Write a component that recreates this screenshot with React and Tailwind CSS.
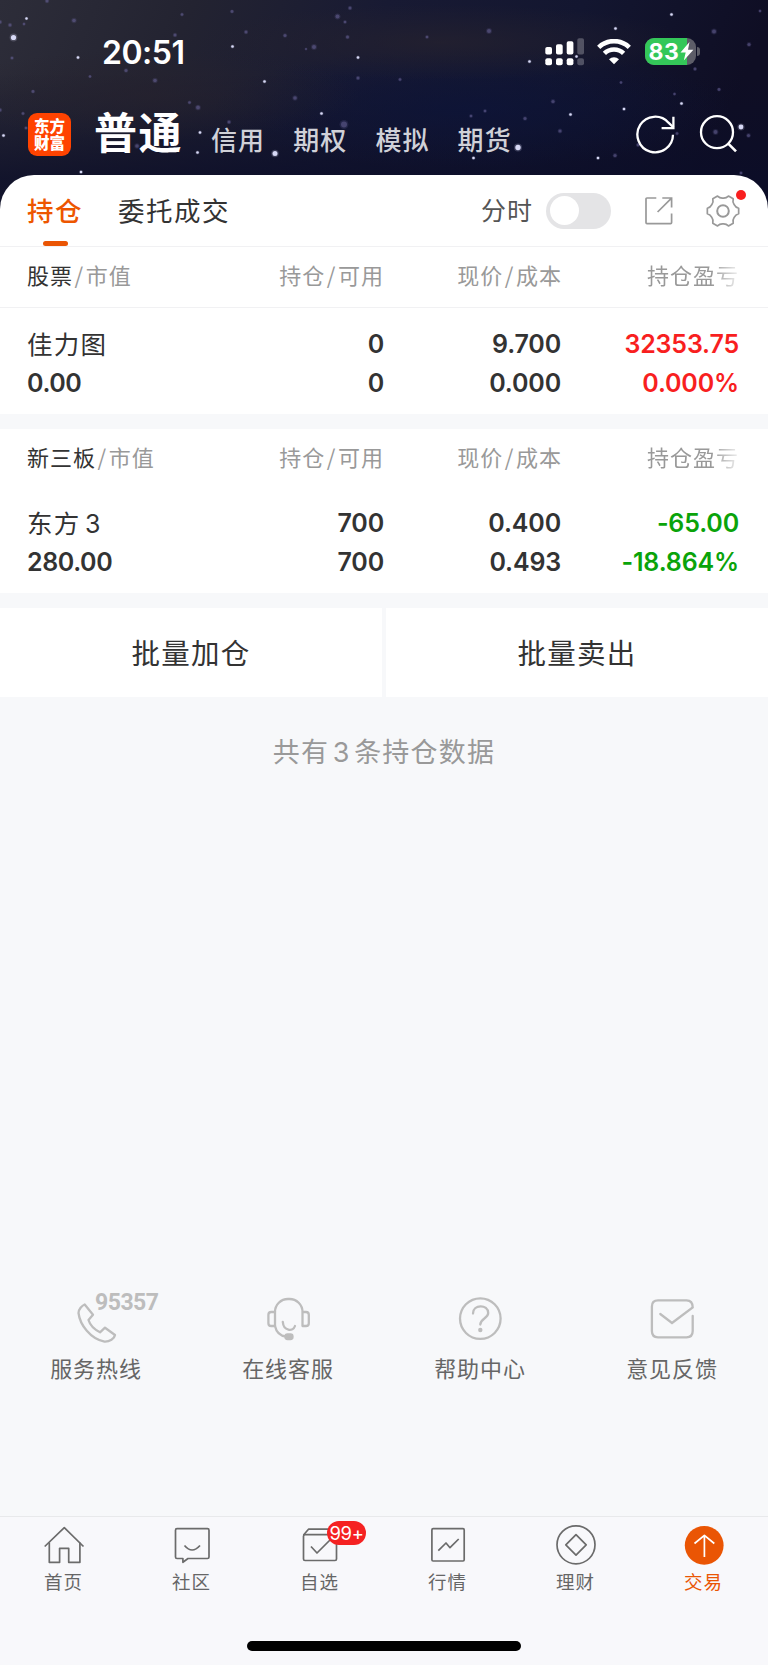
// ============================================================
// App.jsx — 交易 / 持仓 page
// ============================================================
import React, { useState } from 'react';

// [x, y, radius, bright]
const STARS = [
  [26.5, 18.5, 1.2, 1], [13.5, 37.5, 2.6, 1], [78, 57.5, 1.3, 1], [74, 20.5, 1.8, 0], [10, 25, 1.5, 0],
  [0, 22, 1.5, 0], [24, 24, 1.2, 0], [12, 58, 1.3, 0], [47, 1, 1.5, 0], [126, 70.5, 1.5, 0],
  [155, 80.5, 1.8, 0], [232.5, 46.5, 1.3, 1], [246, 32, 1.5, 0], [232, 11.5, 1.4, 0], [182, 14.5, 1.3, 0],
  [175, 35, 1.5, 0], [285, 35.5, 1.5, 0], [337.5, 16.5, 2, 0], [350, 8, 1.5, 0], [345, 22, 1.3, 0],
  [347.5, 37, 1.5, 0], [314, 47, 2, 0], [306, 49, 1, 0], [358, 57.5, 1.3, 1], [358, 78, 1.5, 0],
  [264.5, 81.5, 1.3, 1], [295, 98, 1.8, 0], [189.5, 102.5, 1.3, 0], [198, 107.5, 1.9, 0], [321.5, 113.5, 1.3, 1],
  [344, 124.5, 3, 0], [200, 132.5, 1.3, 1], [197.5, 152.5, 1.3, 1], [275, 153.5, 2.5, 1], [3.5, 135.5, 1.3, 1],
  [33, 91.5, 1.4, 0], [0, 110, 1.5, 0], [23, 113.5, 1.3, 0], [26, 128, 1.3, 0], [81, 172, 1.3, 1],
  [229, 122, 1.5, 0], [137, 146, 1.8, 0], [90, 76.5, 1.2, 0], [489, 31, 2, 0], [427, 37, 1.3, 0],
  [671.5, 14.5, 1.3, 1], [615.5, 28.5, 1.3, 1], [714, 31.5, 2, 0], [529.5, 61.5, 1.3, 1], [576.5, 56.5, 1.2, 1],
  [400, 79.5, 1.3, 0], [553, 101.5, 1.6, 0], [624, 109, 1.3, 1], [681.5, 103.5, 1.3, 1], [570.5, 114.5, 1.3, 1],
  [525, 118.5, 1.5, 0], [471, 116, 1.3, 0], [485, 111, 1.3, 0], [560, 131, 1.6, 0], [518, 147.5, 2.7, 1],
  [473.5, 158, 1.3, 1], [598, 158, 1.3, 1], [638, 145, 1.4, 0], [741, 127, 2.4, 1], [719, 89.5, 1.4, 0],
  [749, 44.5, 1.6, 0], [695, 69, 1.4, 0], [748.5, 135.5, 1.6, 0], [741, 173, 1.3, 0], [621, 82.5, 1.2, 0],
  [674.5, 94, 1.2, 0], [615, 155.5, 1.6, 0], [677, 133.5, 1.3, 0], [760, 11, 1.2, 0], [715.5, 132, 2, 0],
];

const GROUPS = [
  {
    title: '股票',
    lined: true,
    name: '佳力图',
    value: '0.00',
    hold: ['0', '0'],
    price: ['9.700', '0.000'],
    profit: ['32353.75', '0.000%'],
    color: 'text-[#f81f1f]',
  },
  {
    title: '新三板',
    lined: false,
    name: '东方',
    suffix: '3',
    value: '280.00',
    hold: ['700', '700'],
    price: ['0.400', '0.493'],
    profit: ['-65.00', '-18.864%'],
    color: 'text-[#0aa30a]',
  },
];

// six-tooth cog outline, centred on 0,0
const cogPath = () => {
  const pt = (deg, r) => {
    const a = (deg * Math.PI) / 180;
    return `${(r * Math.cos(a)).toFixed(2)} ${(r * Math.sin(a)).toFixed(2)}`;
  };
  let d = '';
  for (let k = 0; k < 6; k++) {
    const a = k * 60;
    d += `${k === 0 ? 'M' : 'L'}${pt(a - 10, 15.9)} L${pt(a + 10, 15.9)} C${pt(a + 16, 13)} ${pt(a + 21, 12.9)} ${pt(a + 30, 12.9)} C${pt(a + 39, 12.9)} ${pt(a + 44, 13)} ${pt(a + 50, 15.9)} `;
  }
  return d + 'Z';
};

function NightSky() {
  return (
    <svg className="absolute inset-0 w-full h-full" viewBox="0 0 768 210" preserveAspectRatio="none">
      <defs>
        <linearGradient id="sky" x1="0" y1="0" x2="1" y2="0.12">
          <stop offset="0" stopColor="#2d2d39" />
          <stop offset="0.25" stopColor="#232331" />
          <stop offset="0.5" stopColor="#181a33" />
          <stop offset="0.75" stopColor="#131630" />
          <stop offset="1" stopColor="#0f0e24" />
        </linearGradient>
        <linearGradient id="fade" x1="0" y1="0" x2="0" y2="1">
          <stop offset="0.35" stopColor="#0b0d28" stopOpacity="0" />
          <stop offset="0.85" stopColor="#0b0d28" stopOpacity="0.75" />
        </linearGradient>
        <radialGradient id="blue">
          <stop offset="0" stopColor="#0d1438" stopOpacity="0.8" />
          <stop offset="1" stopColor="#0d1438" stopOpacity="0" />
        </radialGradient>
        <radialGradient id="dust">
          <stop offset="0" stopColor="#26222e" stopOpacity="0.7" />
          <stop offset="1" stopColor="#26222e" stopOpacity="0" />
        </radialGradient>
      </defs>
      <rect width="768" height="210" fill="url(#sky)" />
      <rect width="768" height="210" fill="url(#fade)" />
      <ellipse cx="470" cy="108" rx="260" ry="60" fill="url(#blue)" />
      <ellipse cx="440" cy="42" rx="250" ry="38" fill="url(#dust)" />
      <ellipse cx="150" cy="95" rx="210" ry="46" fill="url(#dust)" />
      {STARS.map(([x, y, r, bright]) => (
        <g key={`${x}-${y}`} fill={bright ? '#dfe2ff' : '#6a6499'}>
          <circle cx={x} cy={y} r={r * 1.5} opacity="0.2" />
          <circle cx={x} cy={y} r={r} opacity={bright ? 0.95 : 0.5} />
        </g>
      ))}
    </svg>
  );
}

function StatusBar() {
  return (
    <div className="relative flex items-center h-[103px] pl-[102px] pr-[68px] text-white">
      <span className="flex-1 mt-[3px] font-['Inter'] font-semibold text-[32px] leading-none tracking-[-0.5px]">20:51</span>
      <svg className="mt-px" width="40" height="28" viewBox="0 0 40 28" fill="#fff">
        <rect x="0.3" y="9" width="6.7" height="7.5" rx="1.8" />
        <rect x="11" y="6.3" width="6.7" height="10.2" rx="1.8" />
        <rect x="21.7" y="3.3" width="6.7" height="13.2" rx="1.8" />
        <rect x="32.3" y="0.3" width="6.7" height="16.2" rx="1.8" opacity="0.25" />
        <rect x="0.3" y="20.3" width="6.7" height="7" rx="2" />
        <rect x="11" y="20.3" width="6.7" height="7" rx="2" />
        <rect x="21.7" y="20.3" width="6.7" height="7" rx="2" />
        <rect x="32.3" y="20.3" width="6.7" height="7" rx="2" opacity="0.25" />
      </svg>
      <svg className="ml-[12px]" width="34" height="26" viewBox="0 0 34 26" fill="none" stroke="#fff" strokeWidth="4.6">
        <path d="M1.7 8.3a22 22 0 0 1 30.6 0" />
        <path d="M7.4 14.4a13.7 13.7 0 0 1 19.2 0" />
        <path d="M17 25.3l-5-5.1a7.2 7.2 0 0 1 10 0z" fill="#fff" stroke="none" />
      </svg>
      <div className="ml-[14px] flex items-center">
        <div className="relative flex items-center w-[51px] h-[27px] rounded-[9px] overflow-hidden bg-[#5d5d68]">
          <div className="w-[42px] h-full bg-[#34c759]" />
          <span className="absolute left-[4px] top-[2px] font-['Inter'] font-bold text-[23px] leading-[24px] tracking-[0.5px]">83</span>
          <svg className="absolute left-[35px] top-[4px]" width="14" height="19" viewBox="0 0 14 19" fill="#fff">
            <path d="M9.5 0L0.5 10.6h5.2L3.8 18.6 13.4 7.8H8z" />
          </svg>
        </div>
        <div className="ml-[1.5px] w-[3px] h-[9px] rounded-r-full bg-[#5d5d68]" />
      </div>
    </div>
  );
}

function TopNav() {
  return (
    <div className="relative flex items-center h-[72px] pb-[10px] pl-[28px] pr-[30px] text-white">
      <div className="flex items-center justify-center w-[43px] h-[43px] rounded-[9px] bg-[#ff4300] text-[15.5px] leading-[17.5px] font-black">
        <span>
          东方
          <br />
          财富
        </span>
      </div>
      <span className="ml-[23px] -mt-[7px] text-[43px] leading-none font-bold tracking-[1.5px]">普通</span>
      <div className="flex gap-[28px] ml-[28px] mt-[9px] text-[26px] leading-none font-medium tracking-[1.1px] text-[#d0d1d8]">
        <span>信用</span>
        <span>期权</span>
        <span>模拟</span>
        <span>期货</span>
      </div>
      <div className="flex-1" />
      <svg width="102" height="40" viewBox="0 0 102 40" fill="none" stroke="#fff" strokeWidth="2.3">
        <path d="M37 20.8A17.8 17.8 0 1 1 32.5 8.7L37.5 13.5" />
        <path d="M37.4 2.8v11.3H25.6" />
        <circle cx="81" cy="18.2" r="16" />
        <path d="M92 29.3l8 8" strokeWidth="2.6" />
      </svg>
    </div>
  );
}

function Tabs() {
  const [minute, setMinute] = useState(false);
  return (
    <div className="flex h-[72px] pl-[27px] pr-[26px] border-b border-[#f1f1f3] text-[26.5px] tracking-[1.5px]">
      <div className="relative flex items-center h-[71px] pb-[2px] font-medium text-[#ed5600]">
        持仓
        <span className="absolute left-[16px] bottom-0 w-[25px] h-[5px] rounded-[2.5px] bg-[#ea5504]" />
      </div>
      <div className="flex items-center ml-[35px] pb-[2px] text-[#333]">委托成交</div>
      <div className="flex-1" />
      <div className="flex items-center">
        <span className="-mt-[2px] text-[25px] tracking-[1px] text-[#555]">分时</span>
        <button
          onClick={() => setMinute(!minute)}
          className={`flex items-center w-[65px] h-9 ml-[13px] px-[3.5px] rounded-full bg-[#e4e4e6] ${minute ? 'justify-end' : ''}`}
        >
          <span className="w-[29px] h-[29px] rounded-full bg-white" />
        </button>
        <svg className="ml-[33px]" width="30" height="30" viewBox="0 0 30 30" fill="none" stroke="#999" strokeWidth="1.7">
          <path d="M12.3 2H3q-1 0-1 1V26.6q0 1 1 1H26.6q1 0 1-1V17.5" />
          <path d="M18.3 2H27.6V11.5M27.3 2.3L13.6 16" />
        </svg>
        <div className="relative ml-[30px]">
          <svg width="38" height="38" viewBox="-19 -19 38 38" fill="none" stroke="#999" strokeWidth="1.7" strokeLinejoin="round">
            <path d={cogPath()} />
            <circle r="5.8" strokeWidth="2" />
          </svg>
          <span className="absolute right-[-4px] top-[-2px] w-[10.5px] h-[10.5px] rounded-full bg-[#f91f1f]" />
        </div>
      </div>
    </div>
  );
}

function Slash() {
  return <span className="inline-block px-[1.5px]">/</span>;
}

const COLS = 'grid grid-cols-[201px_156px_178px_178px] pl-[27px]';

function Cells({ values, className = '' }) {
  return (
    <div className={`text-right ${className}`}>
      {values.map((v, i) => (
        <div key={i} className="h-[39px]">{v}</div>
      ))}
    </div>
  );
}

function Group({ group }) {
  return (
    <section className="bg-white">
      <div
        className={`${COLS} items-center text-[22px] leading-8 tracking-[1px] text-[#999] ${
          group.lined ? 'h-[61px] pb-[7px] border-b border-[#f1f1f3]' : 'h-[59px] pb-[5px]'
        }`}
      >
        <div>
          <span className="text-[#333]">{group.title}</span>
          <Slash />
          市值
        </div>
        <div className="text-right">
          持仓<Slash />可用
        </div>
        <div className="text-right">
          现价<Slash />成本
        </div>
        <div className="pr-px text-right whitespace-nowrap [mask-image:linear-gradient(to_right,#000_84%,transparent_102%)]">持仓盈亏</div>
      </div>
      <div
        className={`${COLS} font-['Inter'] font-semibold text-[25px] leading-[39px] tracking-[-0.15px] text-[#333] ${
          group.lined ? 'h-[106px] pt-[17px]' : 'h-[105px] pt-4'
        }`}
      >
        <div>
          <div className="h-[39px] -mt-[2px] mb-[2px] font-['Noto_Sans_CJK_SC'] font-normal text-[25.5px] tracking-[1.2px]">
            {group.name}
            {group.suffix && <span className="ml-[4.5px] font-['Inter'] text-[25px]">{group.suffix}</span>}
          </div>
          <div className="h-[39px] tracking-[-0.4px]">{group.value}</div>
        </div>
        <Cells values={group.hold} />
        <Cells values={group.price} className="pr-px" />
        <Cells values={group.profit} className={`pr-px ${group.color}`} />
      </div>
    </section>
  );
}

const HELP_LINKS = [
  {
    label: '服务热线',
    icon: <path d="M12.7 9.5L21 19.7 16.5 25C18 30 22.5 34.5 28 37.3L33 32.7 43 40C42.5 43.5 37.5 47 32.5 46.7 18.5 44 8 30 6.5 18 6.5 14.5 10 10.5 12.7 9.5Z" />,
  },
  {
    label: '在线客服',
    icon: (
      <>
        <path d="M11 31V17A13 13 0 0 1 24 4h1.5A13 13 0 0 1 38.5 17V31h3.5q2.8 0 2.8-2.8V19.8q0-2.8-2.8-2.8h-3.5" />
        <path d="M11 17H7.2q-2.8 0-2.8 2.8v8.4Q4.4 31 7.2 31H11Q13 40.5 22 41.5" />
        <path d="M18.8 27C19.5 36 29 37 31 31" />
        <rect x="21.5" y="39.5" width="7" height="4.5" rx="2" fill="#bdbdbd" />
      </>
    ),
  },
  {
    label: '帮助中心',
    icon: (
      <>
        <circle cx="24.3" cy="23.6" r="20.3" />
        <path d="M17 18.5C17 9 32.2 9 32.2 18 32.2 23.5 24.3 23.5 24.3 29.5" />
        <circle cx="24.3" cy="35" r="2.2" fill="#bdbdbd" stroke="none" />
      </>
    ),
  },
  {
    label: '意见反馈',
    icon: <path d="M44.7 21V36Q44.7 42.3 38.5 42.3H10Q3.9 42.3 3.9 36V11.5Q3.9 5.3 10 5.3H38.5Q44.7 5.3 44.7 12.5L24 28 12.3 19" strokeLinejoin="miter" />,
  },
];

const NAV = [
  {
    label: '首页',
    icon: (
      <>
        <path d="M2.7 23.5L22.3 4.7 41.5 23.5" />
        <path d="M7.3 19.5V39.3H17.6V25.3H26.7V39.3H37.9V19.5" />
      </>
    ),
  },
  {
    label: '社区',
    icon: (
      <>
        <path d="M7 5.7H37.5q1.5 0 1.5 1.5V34q0 1.5-1.5 1.5H18L12.9 39.3V35.5H7q-1.5 0-1.5-1.5V7.2q0-1.5 1.5-1.5Z" />
        <path d="M14.5 22.5Q22 31.5 30 22.5" />
      </>
    ),
  },
  {
    label: '自选',
    badge: '99+',
    icon: (
      <>
        <path d="M5.5 12L10.5 6.2H35" />
        <rect x="5.5" y="11.7" width="33" height="25.8" rx="1.5" />
        <path d="M13 23.5L19 30 32 17" />
      </>
    ),
  },
  {
    label: '行情',
    icon: (
      <>
        <rect x="5.9" y="5.7" width="32.3" height="32.3" rx="1.2" />
        <path d="M12.3 27.7L20 20 24 24.7 32.7 16" />
      </>
    ),
  },
  {
    label: '理财',
    icon: (
      <>
        <circle cx="22" cy="21.8" r="19" />
        <path d="M22 11.7L32.2 21.9 22 32.1 11.8 21.9Z" />
      </>
    ),
  },
  {
    label: '交易',
    active: true,
    icon: (
      <>
        <circle cx="22.2" cy="22.3" r="19.4" fill="#ea5504" stroke="none" />
        <path d="M22.4 34V12.5M12.5 20.5L22.4 12.3 32.3 20.5" stroke="#fff" strokeWidth="1.7" />
      </>
    ),
  },
];

export default function App() {
  return (
    <div className="flex flex-col w-[768px] h-[1665px] overflow-hidden bg-[#f7f8fa] font-['Noto_Sans_CJK_SC',sans-serif]">
      {/* ── Header ── */}
      <header className="relative shrink-0 h-[210px] -mb-[35px]">
        <NightSky />
        <StatusBar />
        <TopNav />
      </header>

      {/* ── Holdings ── */}
      <main className="relative shrink-0">
        <div className="bg-white rounded-t-[34px]">
          <Tabs />
          <Group group={GROUPS[0]} />
        </div>
        <div className="h-[15px]" />
        <Group group={GROUPS[1]} />
        <div className="h-[15px]" />
        <div className="grid grid-cols-2 gap-[4px] text-[28.5px] tracking-[1.3px] text-[#333]">
          <button className="h-[89px] bg-white">批量加仓</button>
          <button className="h-[89px] bg-white">批量卖出</button>
        </div>
        <p className="mt-[34px] text-center text-[27px] leading-10 tracking-[1.2px] text-[#999]">
          共有<span className="mx-[3.5px] font-['Inter']">3</span>条持仓数据
        </p>
      </main>

      <div className="flex-1" />

      {/* ── Help links ── */}
      <div className="grid grid-cols-4 shrink-0 h-[221px]">
        {HELP_LINKS.map((item, i) => (
          <div key={item.label} className="relative flex flex-col items-center">
            <svg className="overflow-visible" width="48" height="48" viewBox="0 0 48 48" fill="none" stroke="#bdbdbd" strokeWidth="2.3" strokeLinecap="round" strokeLinejoin="round">
              {item.icon}
            </svg>
            {i === 0 && (
              <span className="absolute left-[95px] -top-[4px] font-['Roboto'] font-bold text-[23px] leading-6 tracking-[-0.5px] text-[#bdbdbd]">95357</span>
            )}
            <span className="mt-[8px] text-[22px] leading-8 tracking-[0.9px] text-[#666]">{item.label}</span>
          </div>
        ))}
      </div>

      {/* ── Tab bar ── */}
      <footer className="flex flex-col shrink-0 h-[149px] border-t border-[#e8e9eb] bg-[#f8f8fb]">
        <div className="grid grid-cols-6 pt-[6px]">
          {NAV.map((item) => (
            <div key={item.label} className="relative flex flex-col items-center">
              <svg width="44" height="44" viewBox="0 0 44 44" fill="none" stroke="#6b6b6b" strokeWidth="1.7" strokeLinejoin="round">
                {item.icon}
              </svg>
              {item.badge && (
                <span className="absolute left-[71px] -top-[2px] flex items-center justify-center w-[39px] h-[24px] rounded-full bg-[#f52222] font-['Inter'] text-[18.5px] leading-none tracking-[-0.4px] text-white">
                  {item.badge}
                </span>
              )}
              <span className={`-mt-px -ml-px text-[18.5px] leading-[30px] tracking-[1px] ${item.active ? 'text-[#ea5504]' : 'text-[#666]'}`}>
                {item.label}
              </span>
            </div>
          ))}
        </div>
        <div className="mt-auto mb-[14px] mx-auto w-[274px] h-[10px] rounded-full bg-black" />
      </footer>
    </div>
  );
}
